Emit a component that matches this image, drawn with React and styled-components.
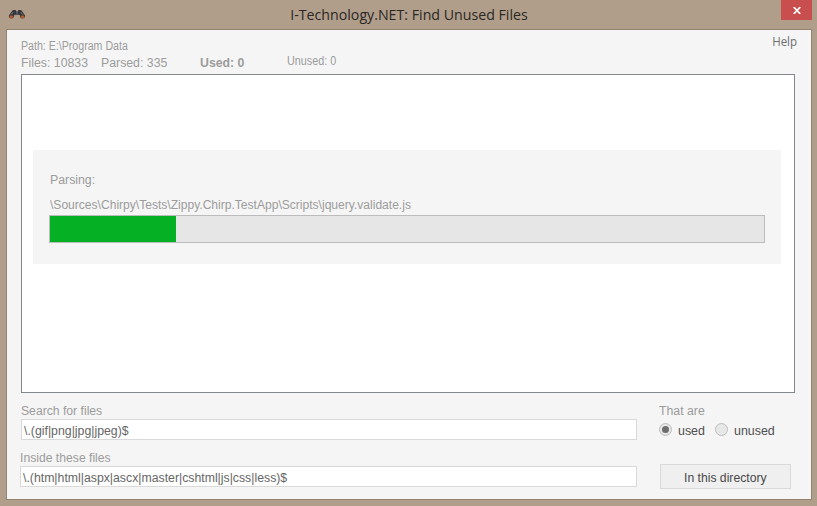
import React from "react";
import styled, { createGlobalStyle } from "styled-components";

const GlobalStyle = createGlobalStyle`
  * { box-sizing: border-box; }
  body { margin: 0; overflow: hidden; }
`;

const Window = styled.main`
  display: flex;
  flex-direction: column;
  width: 817px;
  height: 506px;
  padding: 0 5px 6px 6px;
  background: #b09e8b;
  font: 12.3px/16px "Liberation Sans", Arial, sans-serif;
  color: #9c9c9c;
`;

const TitleBar = styled.header`
  display: grid;
  grid-template-columns: 31px 1fr 31px;
  height: 29px;
  flex: none;
`;

const AppIcon = styled.svg`
  width: 18px;
  height: 12px;
  margin: 9px 0 0 2px;
`;

const Title = styled.h1`
  margin: 4px 0 0;
  text-align: center;
  font: 400 15px/20px "Open Sans", sans-serif;
  color: #2b2724;
  white-space: nowrap;
  transform: scaleX(0.946);
`;

const CloseButton = styled.button`
  display: flex;
  justify-content: center;
  width: 31px;
  height: 20px;
  padding: 7px 0 0;
  border: 0;
  background: #c94f4f;

  svg { width: 8px; height: 7px; }
`;

const Client = styled.section`
  display: flex;
  flex-direction: column;
  flex: 1;
  border: 1px solid #94836f;
  background: #f5f5f5;
  padding: 0 16px 0 13px;
`;

const Label = styled.span`
  display: block;
  height: 16px;
  white-space: nowrap;
  font-weight: ${(p) => (p.$bold ? 700 : 400)};
  transform-origin: 0 0;
  transform: scaleX(${(p) => p.$stretch || 1});
`;

const Summary = styled.div`
  display: flex;
  justify-content: space-between;
  height: 44px;
  padding: 8px 0 0 1px;
`;

const CountRow = styled.div`
  display: grid;
  grid-template-columns: 80px 99px 87px 60px;
  margin-top: 1px;
`;

const UnusedCount = styled(Label)`
  font-size: 12px;
  margin-top: -2px;
`;

const PathLabel = styled(Label)`
  font-size: 12px;
`;

const HelpLink = styled.a`
  height: 16px;
  margin: -4px -2px 0 0;
  font: 12.5px/16px "Open Sans", sans-serif;
  color: #6d6d6d;
  transform: scaleX(0.92);
  transform-origin: 100% 0;
`;

const Results = styled.div`
  width: 774px;
  height: 319px;
  margin-left: 1px;
  flex: none;
  padding: 75px 13px 0 11px;
  border: 1px solid #828790;
  background: #fff;
`;

const ProgressPanel = styled.div`
  display: flex;
  flex-direction: column;
  height: 114px;
  width: 748px;
  padding: 22px 16px 0;
  background: #f5f5f5;
`;

const ProgressText = styled(Label)`
  margin: 0 0 9px 1px;

  & + & { margin-bottom: 2px; }
`;

const ProgressBar = styled.div`
  height: 28px;
  border: 1px solid #bcbcbc;
  background: #e6e6e6;
`;

const ProgressFill = styled.div`
  width: 126px;
  height: 100%;
  background: #06b025;
`;

const Footer = styled.div`
  display: grid;
  grid-template-columns: 617px 132px;
  column-gap: 22px;
  padding-top: 10px;
`;

const Field = styled.label`
  display: block;
  height: 47px;
  padding-left: ${(p) => p.$indent || 0}px;
`;

const TextBox = styled.span`
  display: block;
  width: ${(p) => p.$width}px;
  height: 21px;
  padding: 3px 2px 0;
  border: 1px solid #d9d9d9;
  background: #fff;
  color: #666;
`;

const RadioRow = styled.div`
  display: flex;
  height: 16px;
  margin-top: 4px;
  color: #505050;
`;

const RadioOption = styled.label`
  display: flex;
  gap: 6px;
  width: 56px;
`;

const RadioDot = styled.span`
  display: flex;
  align-items: center;
  justify-content: center;
  flex: none;
  width: 13px;
  height: 13px;
  border: 1px solid #bdbdbd;
  border-radius: 50%;
  background: #e7e7e7;

  &::after {
    content: "";
    width: 7px;
    height: 7px;
    border-radius: 50%;
    background: ${(p) => (p.$checked ? "#6e6e6e" : "transparent")};
  }
`;

const DirectoryButton = styled.button`
  display: flex;
  width: 131px;
  height: 25px;
  margin: 25px 0 0 1px;
  padding: 5px 0 0 22.5px;
  border: 1px solid #d9d9d9;
  background: #efefef;
  font: inherit;
  color: #484848;
`;

function Binoculars() {
  return (
    <AppIcon viewBox="0 0 18 12">
      <path d="M5 1h2.500l1 1.400h1L10.500 1H13l1.200 1.200 3 4.500-2.600 1.800-3.600-2.700H7L3.400 8.500.800 6.700l3-4.500z" fill="#35363c" />
      <path d="M5.200 3.200 3 6M12.800 3.200l2.400 2.800" stroke="#6d6d73" strokeWidth="1.100" />
      <path d="M8.200 2.500h1.600v2H8.200z" fill="#6d6e75" />
      <ellipse cx="3.400" cy="7.500" rx="2.500" ry="2.100" fill="#4a3632" />
      <ellipse cx="14.500" cy="7.500" rx="2.500" ry="2.100" fill="#4a3632" />
      <ellipse cx="3.300" cy="7.800" rx="1.800" ry="1.400" fill="#b85c30" />
      <ellipse cx="14.600" cy="7.800" rx="1.800" ry="1.400" fill="#b85c30" />
    </AppIcon>
  );
}

function Radio({ checked, label }) {
  return (
    <RadioOption>
      <RadioDot $checked={checked} />
      <Label $stretch={1.01}>{label}</Label>
    </RadioOption>
  );
}

export default function App() {
  return (
    <Window>
      <GlobalStyle />
      <TitleBar>
        <Binoculars />
        <Title>I-Technology.NET: Find Unused Files</Title>
        <CloseButton aria-label="Close">
          <svg viewBox="0 0 8 7">
            <path d="M.7 0 7.300 7M7.300 0 .7 7" stroke="#fff" strokeWidth="1.700" />
          </svg>
        </CloseButton>
      </TitleBar>
      <Client>
        <Summary>
          <div>
            <PathLabel $stretch={0.885}>Path: E:\Program Data</PathLabel>
            <CountRow>
              <Label>Files: 10833</Label>
              <Label>Parsed: 335</Label>
              <Label $bold>Used: 0</Label>
              <UnusedCount $stretch={0.9}>Unused: 0</UnusedCount>
            </CountRow>
          </div>
          <HelpLink>Help</HelpLink>
        </Summary>
        <Results>
          <ProgressPanel>
            <ProgressText>Parsing:</ProgressText>
            <ProgressText $stretch={0.981}>
              {"\\Sources\\Chirpy\\Tests\\Zippy.Chirp.TestApp\\Scripts\\jquery.validate.js"}
            </ProgressText>
            <ProgressBar>
              <ProgressFill />
            </ProgressBar>
          </ProgressPanel>
        </Results>
        <Footer>
          <div>
            <Field $indent={1}>
              <Label $stretch={0.99}>Search for files</Label>
              <TextBox $width={616}>
                <Label>{"\\.(gif|png|jpg|jpeg)$"}</Label>
              </TextBox>
            </Field>
            <Field>
              <Label $stretch={0.99}>Inside these files</Label>
              <TextBox $width={617}>
                <Label $stretch={0.998}>{"\\.(htm|html|aspx|ascx|master|cshtml|js|css|less)$"}</Label>
              </TextBox>
            </Field>
          </div>
          <div>
            <Label>That are</Label>
            <RadioRow>
              <Radio checked label="used" />
              <Radio label="unused" />
            </RadioRow>
            <DirectoryButton>
              <Label $stretch={0.99}>In this directory</Label>
            </DirectoryButton>
          </div>
        </Footer>
      </Client>
    </Window>
  );
}
